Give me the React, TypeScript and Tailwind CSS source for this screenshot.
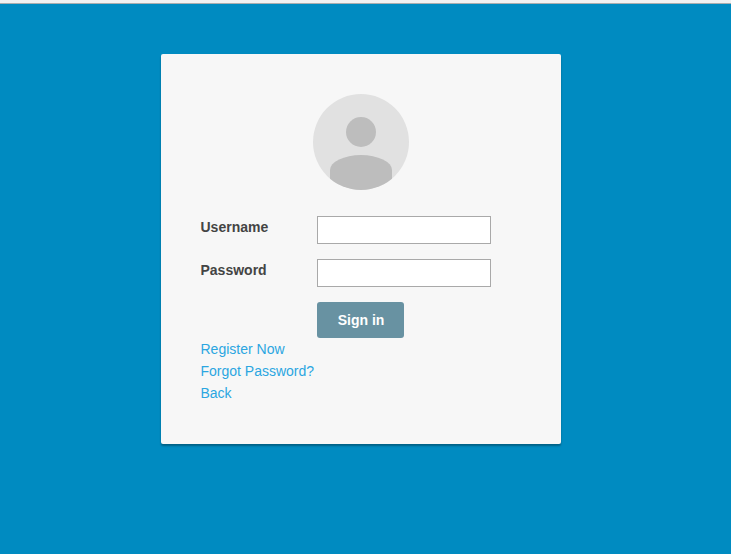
export default function App() {
  return (
    <div className="h-[554px] w-[731px] overflow-hidden border-t-[3px] border-[#f1f1f1] bg-[#008bc1] font-['Liberation_Sans',Arial,sans-serif] text-[14px] leading-[22px] text-[#444]">
      <div className="h-px bg-[#a9adaf]" />
      <main className="mt-[50px] ml-[161px] h-[390px] w-[400px] rounded-[2px] bg-[#f7f7f7] p-10 shadow-[0_2px_2px_rgba(0,0,0,0.3)]">
        <svg className="mx-auto block" width="96" height="96" viewBox="0 0 96 96" aria-hidden="true">
          <defs>
            <clipPath id="avatar"><circle cx="48" cy="48" r="48" /></clipPath>
          </defs>
          <g clipPath="url(#avatar)">
            <rect width="96" height="96" fill="#e1e1e1" />
            <circle cx="48" cy="38" r="15" fill="#bdbdbd" />
            <path d="M17 96V76A31 15 0 0 1 79 76V96Z" fill="#bdbdbd" />
          </g>
        </svg>
        <form className="mt-[26px]" onSubmit={(e) => e.preventDefault()}>
          <div className="flex h-[43px]">
            <label htmlFor="user" className="-ml-[0.5px] w-[116.5px] font-bold">Username</label>
            <input id="user" className="h-7 w-[174px] border border-[#a9a9a9] bg-white px-2 outline-none" />
          </div>
          <div className="flex h-[43px]">
            <label htmlFor="pass" className="-ml-[0.5px] w-[116.5px] font-bold">Password</label>
            <input id="pass" type="password" className="h-7 w-[174px] border border-[#a9a9a9] bg-white px-2 outline-none" />
          </div>
          <button className="ml-[116px] block h-9 w-[87px] rounded-[3px] bg-[#6892a2] pl-px font-bold text-white">Sign in</button>
        </form>
        <nav className="-ml-[0.5px] flex flex-col items-start text-[#2ba6e1]">
          <a href="#register">Register Now</a>
          <a href="#forgot">Forgot Password?</a>
          <a href="#back">Back</a>
        </nav>
      </main>
    </div>
  );
}
